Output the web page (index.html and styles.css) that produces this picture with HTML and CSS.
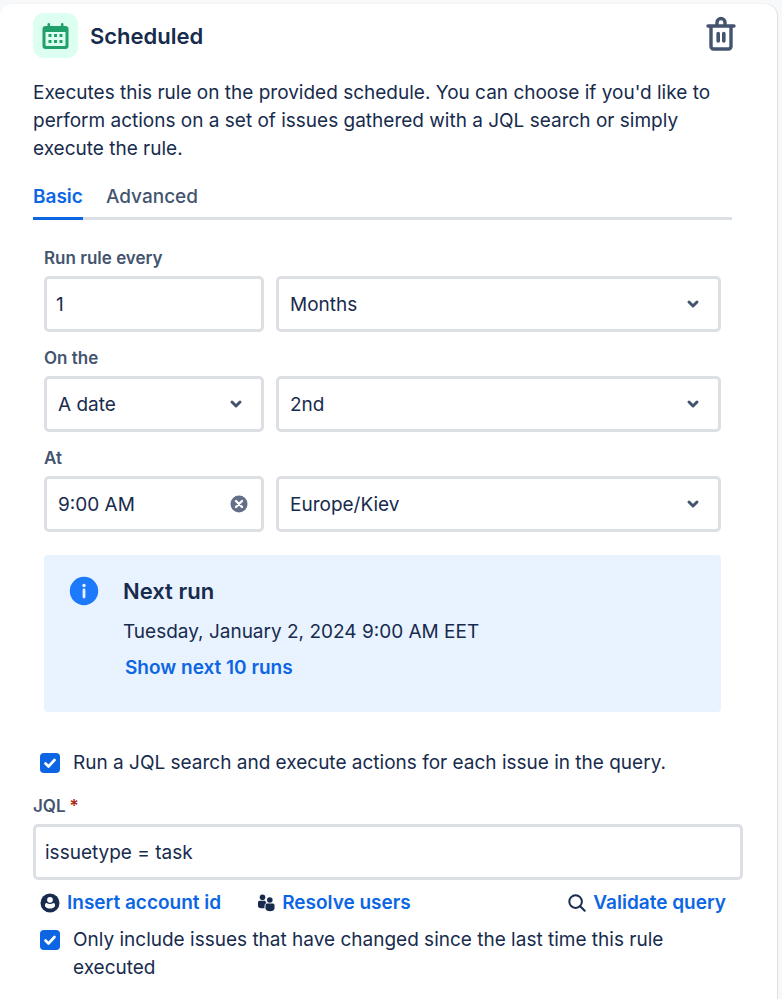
FILE: index.html
```html
<!DOCTYPE html>
<html lang="en">
<head>
  <meta charset="UTF-8" />
  <title>Scheduled trigger</title>
  <meta name="viewport" content="width=device-width, initial-scale=1.0" />
  <link rel="stylesheet" href="styles.css">
</head>
<body>

  <main class="card">
    <header class="header">
      <span class="header-icon">
        <svg width="28" height="28" viewBox="0 0 28 28">
          <path fill="#22a06b" fill-rule="evenodd" d="M5.500 2.200a1.300 1.300 0 0 1 2.600 0V4h10.800V2.200a1.300 1.300 0 0 1 2.600 0V4h2a3 3 0 0 1 3 3v17a3 3 0 0 1-3 3h-20a3 3 0 0 1-3-3V7a3 3 0 0 1 3-3h2zM3.500 10v13a1 1 0 0 0 1 1h18a1 1 0 0 0 1-1V10z"/>
          <path fill="#22a06b" d="M6.500 12h3v3h-3zM12 12h3v3h-3zM17.500 12h3v3h-3zM6.500 18h3v3h-3zM12 18h3v3h-3zM17.500 18h3v3h-3z"/>
        </svg>
      </span>
      <h1>Scheduled</h1>
      <button class="delete" type="button" aria-label="Delete">
        <svg width="32" height="36" viewBox="0 0 32 36" fill="none" stroke="#44546f" stroke-linecap="round" stroke-linejoin="round">
          <path stroke-width="3.400" d="M3 10h26M6 10.500v20a2.500 2.500 0 0 0 2.500 2.500h15a2.500 2.500 0 0 0 2.500-2.500v-20M12 9V6.500a4 4 0 0 1 8 0V9"/>
          <path stroke-width="3.600" d="M13.200 17.500v7.500M18.800 17.500v7.500"/>
        </svg>
      </button>
    </header>

    <p class="description">Executes this rule on the provided schedule. You can choose if you'd like to perform actions on a set of issues gathered with a JQL search or simply execute the rule.</p>

    <nav class="tabs">
      <a class="tab active" href="#basic">Basic</a>
      <a class="tab" href="#advanced">Advanced</a>
    </nav>

    <section class="schedule" id="basic">
      <div class="group">
        <label class="label" for="interval">Run rule every</label>
        <div class="row">
          <input class="field" id="interval" type="text" value="1" />
          <div class="control">
            <select class="field" aria-label="Unit"><option>Months</option></select>
            <svg class="chevron" width="14" height="10" viewBox="0 0 14 10"><path d="M3 3l4 4 4-4"/></svg>
          </div>
        </div>
      </div>

      <div class="group">
        <label class="label" for="on">On the</label>
        <div class="row">
          <div class="control">
            <select class="field" id="on"><option>A date</option></select>
            <svg class="chevron" width="14" height="10" viewBox="0 0 14 10"><path d="M3 3l4 4 4-4"/></svg>
          </div>
          <div class="control">
            <select class="field" aria-label="Day of month"><option>2nd</option></select>
            <svg class="chevron" width="14" height="10" viewBox="0 0 14 10"><path d="M3 3l4 4 4-4"/></svg>
          </div>
        </div>
      </div>

      <div class="group">
        <label class="label" for="time">At</label>
        <div class="row">
          <div class="control time">
            <input class="field" id="time" type="text" value="9:00 AM" />
            <button class="clear" type="button" aria-label="Clear time">
              <svg width="18" height="18" viewBox="0 0 18 18">
                <circle cx="9" cy="9" r="8.500" fill="#626f86"/>
                <path d="M6 6l6 6M12 6l-6 6" stroke="#fff" stroke-width="2.400" stroke-linecap="round"/>
              </svg>
            </button>
          </div>
          <div class="control">
            <select class="field" aria-label="Time zone"><option>Europe/Kiev</option></select>
            <svg class="chevron" width="14" height="10" viewBox="0 0 14 10"><path d="M3 3l4 4 4-4"/></svg>
          </div>
        </div>
      </div>

      <div class="info">
        <svg width="30" height="30" viewBox="0 0 30 30">
          <circle cx="15" cy="15" r="14.200" fill="#1d7afc"/>
          <circle cx="15" cy="9.500" r="1.700" fill="#e9f2ff"/>
          <path d="M15 14v7" stroke="#e9f2ff" stroke-width="2.800" stroke-linecap="round"/>
        </svg>
        <div class="info-body">
          <h2>Next run</h2>
          <p>Tuesday, January 2, 2024 9:00 AM EET</p>
          <a href="#runs">Show next 10 runs</a>
        </div>
      </div>
    </section>

    <label class="check">
      <input type="checkbox" checked />
      <span>Run a JQL search and execute actions for each issue in the query.</span>
    </label>

    <label class="label jql-label" for="jql">JQL<span class="required">*</span></label>
    <input class="field jql" id="jql" type="text" value="issuetype = task" />

    <div class="links">
      <a href="#account">
        <svg width="20" height="20" viewBox="0 0 20 20">
          <circle cx="10" cy="10" r="9.500" fill="#172b4d"/>
          <circle cx="10" cy="6.800" r="2.900" fill="#fff"/>
          <path d="M5 11.600a1.500 1.500 0 0 1 1.500-1.500c2.200 1.200 4.800 1.200 7 0a1.500 1.500 0 0 1 1.500 1.500v1.600c-1 1.500-2.800 2.300-5 2.300s-4-.8-5-2.300z" fill="#fff"/>
        </svg>
        Insert account id
      </a>
      <a href="#users">
        <svg width="18" height="18" viewBox="0 0 18 18" fill="#172b4d">
          <circle cx="5.500" cy="3.200" r="2.800"/>
          <circle cx="12.800" cy="6" r="2.800"/>
          <path d="M1 8.200a1.500 1.500 0 0 1 1.500-1.500h5.700a5 5 0 0 0 1.300 2.300A3 3 0 0 0 7.500 12v2.200H4c-1.800 0-3-.8-3-2.200z"/>
          <path d="M8.500 11.100a1.500 1.500 0 0 1 1.500-1.500h6a1.500 1.500 0 0 1 1.500 1.500v3.200c0 1.800-2 3-4.500 3s-4.500-1.200-4.500-3z"/>
        </svg>
        Resolve users
      </a>
      <a class="validate" href="#validate">
        <svg width="18" height="18" viewBox="0 0 18 18" fill="none" stroke="#172b4d" stroke-width="2" stroke-linecap="round">
          <circle cx="7.600" cy="7.600" r="6.300"/>
          <path d="M12.200 12.200l4.500 4.500"/>
        </svg>
        Validate query
      </a>
    </div>

    <label class="check">
      <input type="checkbox" checked />
      <span>Only include issues that have changed since the last time this rule executed</span>
    </label>
  </main>

</body>
</html>
```
FILE: styles.css
```css
* {
  box-sizing: border-box;
}

body {
  margin: 0;
  padding: 4px 5px 0 0;
  background-color: #f7f8f9;
  color: #172b4d;
  font-family: Inter, sans-serif;
  font-size: 19px;
  line-height: 28px;
}

h1, h2, p {
  margin: 0;
}

a {
  color: #0c66e4;
  font-weight: 600;
  text-decoration: none;
}

button {
  display: flex;
  padding: 0;
  border: 0;
  background: none;
  cursor: pointer;
}

.card {
  min-height: calc(100vh - 4px);
  padding: 9px 34px 12px 33px;
  background-color: #fff;
  border-radius: 12px 12px 0 0;
  box-shadow: 1px 0 1px #dcdfe4;
}

.header {
  display: flex;
  align-items: center;
  gap: 12px;
  padding-right: 6px;
}

.header-icon {
  display: flex;
  align-items: center;
  justify-content: center;
  width: 45px;
  height: 45px;
  background-color: #dcfff1;
  border-radius: 11px;
}

.delete {
  margin-bottom: 4px;
}

h1 {
  flex: 1;
  font-size: 22px;
  font-weight: 600;
}

.description {
  margin-top: 21px;
}

.tabs {
  display: flex;
  gap: 23px;
  margin: 16px 11px 0 0;
  box-shadow: inset 0 -3px #dcdfe4;
}

.tab {
  padding: 4px 0 6px;
  border-bottom: 3px solid transparent;
  color: #44546f;
  font-weight: 500;
}

.tab.active {
  border-color: #0c66e4;
  color: #0c66e4;
  font-weight: 600;
}

.schedule {
  padding: 28px 22px 0 11px;
}

.group {
  margin-bottom: 16px;
}

.label {
  display: block;
  padding-bottom: 8px;
  color: #44546f;
  font-size: 17px;
  font-weight: 600;
  line-height: 20px;
}

.row {
  display: grid;
  grid-template-columns: 220fr 445fr;
  gap: 12px;
}

.control {
  position: relative;
}

.field {
  appearance: none;
  width: 100%;
  height: 56px;
  padding: 0 9px;
  border: 3px solid #dcdfe4;
  border-radius: 5px;
  background-color: #fff;
  color: #172b4d;
  font: inherit;
}

.control .field {
  padding: 0 11px;
}

.control select.field {
  padding: 1px 11px 0;
}

.chevron {
  position: absolute;
  top: 23px;
  right: 21px;
  fill: none;
  stroke: #44546f;
  stroke-width: 3;
  stroke-linecap: round;
  stroke-linejoin: round;
  pointer-events: none;
}

.clear {
  position: absolute;
  top: 19px;
  right: 16px;
}

.info {
  display: flex;
  gap: 24px;
  margin-top: 23px;
  padding: 21px 25px 30px;
  background-color: #e9f2ff;
  border-radius: 4px;
}

.info-body a {
  display: block;
  margin: 8px 0 0 2px;
}

h2 {
  margin-bottom: 12px;
  font-size: 22px;
  font-weight: 600;
  line-height: 30px;
}

.check {
  display: flex;
  gap: 13px;
  padding-left: 7px;
}

.schedule + .check {
  margin-top: 37px;
}

.check input {
  appearance: none;
  flex: none;
  width: 20px;
  height: 20px;
  margin: 4px 0 0;
  border-radius: 4px;
  border: 2px solid #8590a2;
}

.check input:checked {
  border: 0;
  background: #0c66e4 url("data:image/svg+xml,%3Csvg xmlns='http://www.w3.org/2000/svg' viewBox='0 0 20 20'%3E%3Cpath d='M5.500 10.500l3 3 6-6.500' fill='none' stroke='white' stroke-width='2.600' stroke-linecap='round' stroke-linejoin='round'/%3E%3C/svg%3E");
}

.jql-label {
  margin-top: 19px;
}

.required {
  margin-left: 4px;
  color: #ae2a19;
}

.links {
  display: flex;
  gap: 36px;
  margin: 9px 17px 9px 7px;
}

.links a {
  display: flex;
  align-items: center;
  gap: 7px;
}

.validate {
  margin-left: auto;
}
```
